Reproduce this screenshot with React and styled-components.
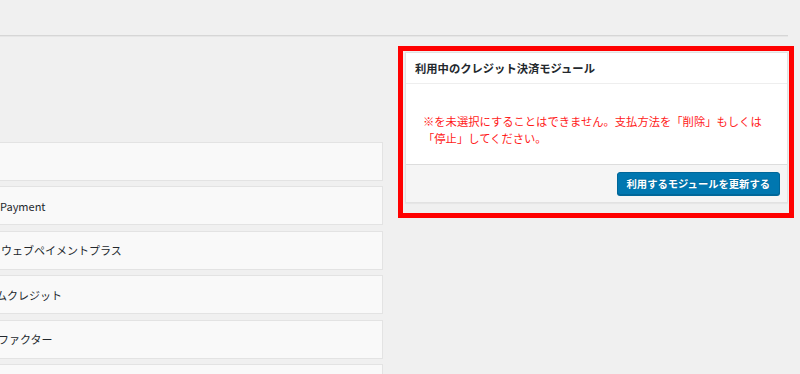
import React from "react";
import styled, { createGlobalStyle } from "styled-components";

const Global = createGlobalStyle`
  html, body { margin: 0; padding: 0; background: #f0f0f0; }
  body {
    font-family: "Noto Sans CJK JP", "Noto Sans", sans-serif;
    color: #23282d;
    overflow: hidden;
  }
`;

const Page = styled.div`
  width: 800px;
  height: 374px;
  overflow: hidden;
  padding: 35px 12px 0 0;
  box-sizing: border-box;
`;

const Divider = styled.div`
  height: 1px;
  background: #d6d6d6;
  box-shadow: 0 1px 0 #e6e6e6;
`;

const Columns = styled.div`
  display: flex;
  align-items: flex-start;
  margin-left: -20px;
`;

const LeftColumn = styled.div`
  width: 403px;
  flex: none;
  padding-top: 106px;
  display: flex;
  flex-direction: column;
  gap: 5.4px;
`;

const ModuleRow = styled.div`
  height: 39px;
  box-sizing: border-box;
  background: #f9f9f9;
  border: 1px solid #e3e3e3;
  display: flex;
  align-items: center;
  padding-left: 20px;
  overflow: hidden;
`;

const ModuleLabel = styled.span`
  font-size: 11px;
  color: #23282d;
  white-space: nowrap;
  margin-left: ${(p) => p.$shift || 0}px;
`;

const Highlight = styled.div`
  margin-left: 15px;
  margin-top: 10px;
  margin-right: -6px;
  width: 396px;
  flex: none;
  box-sizing: border-box;
  border: 5px solid #ff0000;
  padding: 1px 1px 10px 2px;
`;

const Panel = styled.div`
  background: #fff;
  border: 1px solid #e2e2e2;
  box-shadow: 0 1px 1px rgba(0, 0, 0, 0.04);
`;

const PanelHeader = styled.div`
  height: 30px;
  border-bottom: 1px solid #eeeeee;
  display: flex;
  align-items: center;
  padding-left: 9px;
  font-size: 11.3px;
  font-weight: bold;
  color: #23282d;
`;

const PanelBody = styled.div`
  height: 80px;
  box-sizing: border-box;
  padding: 29px 16px 0 17px;
  font-size: 11.3px;
  line-height: 16.6px;
  color: #ff1a1a;
`;

const PanelFooter = styled.div`
  height: 38px;
  box-sizing: border-box;
  background: #f5f5f5;
  border-top: 1px solid #dddddd;
  display: flex;
  align-items: center;
  justify-content: flex-end;
  padding-right: 7px;
`;

const PrimaryButton = styled.button`
  height: 23px;
  padding: 0 9px;
  border-radius: 3px;
  border: 1px solid #006799;
  background: #0077b0;
  box-shadow: 0 1px 0 #006799;
  color: #fff;
  font-family: "Noto Sans CJK JP", sans-serif;
  font-size: 10.3px;
  font-weight: bold;
  line-height: 21px;
  text-shadow: 0 -1px 1px #006799;
  cursor: pointer;
`;

const modules = [
  { label: "", shift: 0 },
  { label: "Payment", shift: -1 },
  { label: "ウェブペイメントプラス", shift: 0 },
  { label: "ムクレジット", shift: -5 },
  { label: "ファクター", shift: -3 },
  { label: "", shift: 0 },
];

export default function App() {
  return (
    <>
      <Global />
      <Page>
        <Divider />
        <Columns>
          <LeftColumn>
            {modules.map((m, i) => (
              <ModuleRow key={i}>
                <ModuleLabel $shift={m.shift}>{m.label}</ModuleLabel>
              </ModuleRow>
            ))}
          </LeftColumn>
          <Highlight>
            <Panel>
              <PanelHeader>利用中のクレジット決済モジュール</PanelHeader>
              <PanelBody>
                ※を未選択にすることはできません。支払方法を「削除」もしくは
                <br />
                「停止」してください。
              </PanelBody>
              <PanelFooter>
                <PrimaryButton>利用するモジュールを更新する</PrimaryButton>
              </PanelFooter>
            </Panel>
          </Highlight>
        </Columns>
      </Page>
    </>
  );
}
